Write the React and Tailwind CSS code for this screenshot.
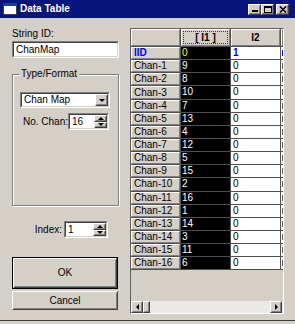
import React from "react";

const chans = [9, 8, 10, 7, 13, 4, 12, 5, 15, 2, 16, 1, 14, 3, 11, 6];

// classic 3d button edge
function Raised({ className = "", inner = "", children }) {
  return (
    <div className={`border border-t-white border-l-white border-b-[#404040] border-r-[#404040] bg-[#d4d0c8] ${className}`}>
      <div className={`w-full h-full border border-t-[#d4d0c8] border-l-[#d4d0c8] border-b-[#808080] border-r-[#808080] flex items-center justify-center ${inner}`}>
        {children}
      </div>
    </div>
  );
}

function Sunken({ className = "", children }) {
  return (
    <div className={`border border-t-[#808080] border-l-[#808080] border-b-white border-r-white ${className}`}>
      <div className="w-full h-full border border-t-[#404040] border-l-[#404040] border-b-[#d4d0c8] border-r-[#d4d0c8] bg-white flex items-center">
        {children}
      </div>
    </div>
  );
}

const DownTri = () => (
  <div className="w-0 h-0 border-x-[3px] border-x-transparent border-t-[3px] border-t-black" />
);
const UpTri = () => (
  <div className="w-0 h-0 border-x-[3px] border-x-transparent border-b-[3px] border-b-black" />
);

function Spinner({ value, className = "" }) {
  return (
    <Sunken className={`w-[44px] h-[17px] ${className}`}>
      <span className="flex-1 pl-[2px]">{value}</span>
      <div className="flex flex-col w-[13px] h-full">
        <Raised className="h-1/2"><UpTri /></Raised>
        <Raised className="h-1/2"><DownTri /></Raised>
      </div>
    </Sunken>
  );
}

function TitleBar() {
  return (
    <div className="h-[18px] bg-[#08157a] flex items-center pl-[3px] pr-[6px]">
      <div className="w-[14px] h-[12px] bg-white border border-[#404040] border-t-[3px] border-t-[#1c3c9c]" />
      <span className="ml-[3px] text-white font-bold text-[10px]">Data Table</span>
      <div className="ml-auto flex items-center">
        <Raised className="w-[13px] h-[11px]" inner="!items-end !justify-start pl-[2px] pb-[1px]">
          <div className="w-[6px] h-[2px] bg-black" />
        </Raised>
        <Raised className="w-[13px] h-[11px]">
          <div className="w-[8px] h-[7px] border border-black border-t-2" />
        </Raised>
        <Raised className="w-[13px] h-[11px] ml-[2px]">
          <svg width="8" height="7" viewBox="0 0 8 7">
            <path d="M1 0.5 L7 6.5 M7 0.5 L1 6.5" stroke="black" strokeWidth="1.6" />
          </svg>
        </Raised>
      </div>
    </div>
  );
}

function LeftPanel() {
  return (
    <div className="ml-[12px] w-[107px] flex flex-col whitespace-nowrap">
      <span className="mt-[10px] h-[12px]">String ID:</span>
      <Sunken className="mt-px h-[17px]">
        <span className="pl-[2px]">ChanMap</span>
      </Sunken>

      <div className="relative mt-[16px] h-[132px] border border-[#808080] shadow-[inset_1px_1px_0_white,1px_1px_0_white] flex flex-col">
        <span className="absolute -top-[7px] left-[6px] px-[2px] bg-[#d4d0c8]">Type/Format</span>
        <Sunken className="mt-[17px] ml-[7px] w-[90px] h-[16px]">
          <span className="flex-1 pl-[2px]">Chan Map</span>
          <Raised className="w-[13px] h-full"><DownTri /></Raised>
        </Sunken>
        <div className="mt-[5px] pl-[10px] pr-[9px] flex items-center justify-between">
          <span>No. Chan:</span>
          <Spinner value="16" />
        </div>
      </div>

      <div className="mt-[15px] pr-[11px] flex items-center justify-end">
        <span className="mr-[2px]">Index:</span>
        <Spinner value="1" />
      </div>

      <div className="mt-[19px] w-[106px] h-[32px] border border-black">
        <Raised className="w-full h-full">OK</Raised>
      </div>
      <Raised className="mt-[2px] w-[106px] h-[19px]">Cancel</Raised>
    </div>
  );
}

function HeadCell({ children, className = "", focus }) {
  return (
    <div className={`relative bg-[#d4d0c8] border border-t-white border-l-white border-b-[#808080] border-r-[#808080] flex items-center overflow-hidden ${className}`}>
      {children}
      {focus && <div className="absolute inset-[1px] border border-dotted border-[#404040]" />}
    </div>
  );
}

// third column is scrolled almost out of view; only a sliver of each digit shows
function Sliver({ blue }) {
  return (
    <div className="h-[12.15px] bg-white flex items-center pl-px">
      <div className={`w-px h-[6px] ${blue ? "bg-[#0000ff]" : "bg-[#606060]"}`} />
    </div>
  );
}

function DataGrid() {
  const cellH = "h-[12.15px]";
  return (
    <div className="ml-[11px] mt-[10px] w-[154px] h-[286px] border border-t-[#606060] border-l-[#606060] border-b-white border-r-white flex flex-col">
      <div className="grid grid-cols-[49px_49px_49px_2px] gap-px bg-[#505050] pb-px">
        <HeadCell className="h-[17px]" />
        <HeadCell className="h-[17px] justify-center font-bold" focus>[ I1 ]</HeadCell>
        <HeadCell className="h-[17px] justify-center font-bold">I2</HeadCell>
        <HeadCell className="h-[17px]" />

        <HeadCell className={`${cellH} pl-[2px] font-bold text-[#0000ff]`}>IID</HeadCell>
        <div className={`${cellH} bg-black text-[#ffff00] pl-px flex items-center`}>0</div>
        <div className={`${cellH} bg-white text-[#0000ff] font-bold pl-[2px] flex items-center`}>1</div>
        <Sliver blue />

        {chans.map((v, i) => (
          <React.Fragment key={i}>
            <HeadCell className={`${cellH} pl-[2px]`}>Chan-{i + 1}</HeadCell>
            <div className={`${cellH} bg-black text-white pl-px flex items-center`}>{v}</div>
            <div className={`${cellH} bg-white pl-[2px] flex items-center`}>0</div>
            <Sliver />
          </React.Fragment>
        ))}
      </div>

      <div className="flex-1" />

      {/* horizontal scroll bar */}
      <div className="h-[12px] flex bg-[#ebe9e5]">
        <Raised className="w-[12px] h-full">
          <div className="w-0 h-0 border-y-[3px] border-y-transparent border-r-[3px] border-r-black" />
        </Raised>
        <Raised className="w-[7px] h-full" />
        <div className="flex-1" />
        <Raised className="w-[12px] h-full mr-px">
          <div className="w-0 h-0 border-y-[3px] border-y-transparent border-l-[3px] border-l-black" />
        </Raised>
      </div>
    </div>
  );
}

export default function App() {
  return (
    <div className="w-[295px] h-[324px] bg-[#d4d0c8] text-black text-[10px] leading-[12px] font-['Liberation_Sans',Arial,sans-serif] overflow-hidden flex flex-col">
      <TitleBar />
      <div className="h-[302px] flex">
        <LeftPanel />
        <DataGrid />
      </div>
      <div className="h-px bg-[#404040]" />
    </div>
  );
}
